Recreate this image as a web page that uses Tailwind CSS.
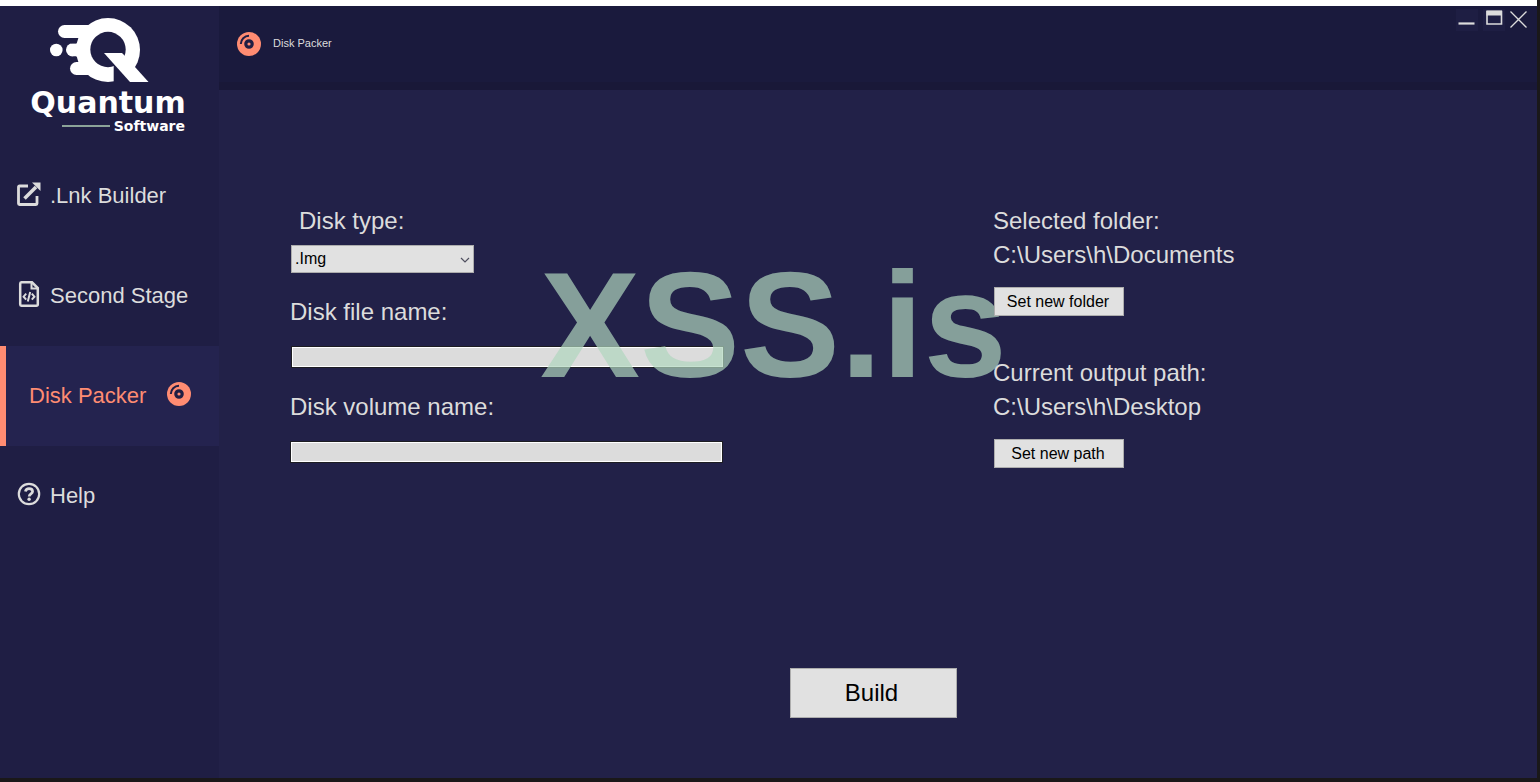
<!DOCTYPE html>
<html lang="en">
<head>
	<meta charset="UTF-8">
	<meta name="viewport" content="width=device-width, initial-scale=1.0">
	<title>Quantum Software - Disk Packer</title>
	<script src="https://cdn.jsdelivr.net/npm/@tailwindcss/browser@4"></script>
</head>
<body class="min-h-screen flex flex-col bg-[#222148] border-r-3 border-b-4 border-[#1a1819] font-['Liberation_Sans',Arial,sans-serif] text-[#dcdcdc]">
	<!-- disc icon, used in the menu and in the header -->
	<svg class="hidden">
		<symbol id="disc" viewBox="0 0 24 24">
			<circle cx="12" cy="12" r="12" fill="#ff8c72"/>
			<path d="M3.800 12A8.200 8.200 0 0 1 12 3.800" fill="none" stroke="#1f1e44" stroke-width="2"/>
			<circle cx="12" cy="12" r="3.200" fill="none" stroke="#1f1e44" stroke-width="3.200"/>
		</symbol>
	</svg>

	<div class="h-1.5 bg-white"></div>

	<div class="flex flex-1">
		<aside class="w-[219px] shrink-0 bg-[#1f1e44]">
			<div class="h-[140px] pt-[11px] pr-[3px] flex flex-col items-center text-white font-['DejaVu_Sans',sans-serif] font-bold">
				<svg class="w-[100px] h-[66px] mb-1 mr-[16px]" viewBox="50 17 100 66" fill="#fff">
					<circle cx="56.3" cy="50" r="6.3"/>
					<rect x="58" y="25" width="40" height="13" rx="6.5"/>
					<rect x="66" y="43.3" width="34" height="13.2" rx="6.5"/>
					<rect x="70" y="62" width="36" height="13" rx="6.5"/>
					<path d="M76 31h16v38H76z"/>
					<path d="M72 40.7h6.500M74 59.3h6.500" stroke="#1f1e44" stroke-width="5.400" stroke-linecap="round"/>
					<circle cx="108" cy="50" r="32"/>
					<circle cx="108" cy="49.5" r="17.7" fill="#1f1e44"/>
					<path d="M113.700 60l19 23h-19z" fill="#1f1e44"/>
					<path d="M104 53h18l1.500 1.500 11.500 12.500L148.500 82H130z"/>
				</svg>
				<div class="text-[30px] leading-[32px]">Quantum</div>
				<div class="w-[154px] flex items-center justify-end gap-[4px] text-[14px] leading-[14px]">
					<span class="w-12 h-[2px] bg-[#8ba398]"></span>
					<span>Software</span>
				</div>
			</div>

			<nav class="text-[22px] leading-[34px]">
				<a href="#" class="h-[100px] pl-[17px] flex items-center gap-[9px]">
					<svg class="w-6 h-6 mb-1" viewBox="0 0 24 24" fill="none" stroke="#dcdcdc" stroke-width="2.800">
						<path d="M11 4H2.500a1 1 0 0 0-1 1v16.500a1 1 0 0 0 1 1h16.500a1 1 0 0 0 1-1V14"/>
						<path d="M7.500 16.500L19 5" stroke-width="3.600"/>
						<path d="M15 .5h8.500V9z" fill="#dcdcdc" stroke="none"/>
					</svg>
					.Lnk Builder
				</a>
				<a href="#" class="h-[100px] pl-[17px] flex items-center gap-[9px]">
					<svg class="w-6 h-[26px] mb-1" viewBox="0 0 24 26" fill="none" stroke="#dcdcdc" stroke-width="2.500">
						<path d="M4.500 1.300H15l5.800 5.700v16.200a1.500 1.500 0 0 1-1.500 1.500h-14.800A1.500 1.500 0 0 1 3.200 23.200v-20.400A1.500 1.500 0 0 1 4.500 1.300z"/>
						<path d="M14.500 1v6.500H21" stroke-width="2"/>
						<path d="M9.200 12.700L6.600 15.700l2.600 3M14.800 12.700l2.600 3-2.600 3M13.200 11l-2.400 9.500" stroke-width="2"/>
					</svg>
					Second Stage
				</a>
				<a href="#" class="h-[100px] pl-[23px] pr-[28px] flex items-center justify-between bg-[#24234f] border-l-6 border-[#ff8c72] text-[#ff8c72]">
					Disk Packer
					<svg class="w-6 h-6 mb-1"><use href="#disc"/></svg>
				</a>
				<a href="#" class="h-[100px] pl-[17px] flex items-center gap-[9px]">
					<svg class="w-6 h-6 mb-1" viewBox="0 0 24 24" fill="none" stroke="#dcdcdc">
						<circle cx="12" cy="12" r="10.200" stroke-width="2.200"/>
						<path d="M8.400 9.600c.4-2 1.700-3 3.600-3 2.100 0 3.600 1.200 3.600 2.900 0 2.500-3.400 2.400-3.400 5" stroke-width="2.700"/>
						<circle cx="12.100" cy="17.300" r="1.700" fill="#dcdcdc" stroke="none"/>
					</svg>
					Help
				</a>
			</nav>
		</aside>

		<div class="flex-1 flex flex-col">
			<header class="h-[84px] pl-[18px] pr-[5px] flex items-center justify-between bg-[#1a1a3d] border-b-8 border-[#191838]">
				<h1 class="flex items-center gap-3 text-[11px] leading-4">
					<svg class="w-6 h-6"><use href="#disc"/></svg>
					<span class="mb-[2px]">Disk Packer</span>
				</h1>
				<div class="self-start pt-[3px] flex gap-[5px]">
					<button type="button" aria-label="Minimize" class="w-[22px] h-[22px] bg-[#1e1e43]">
						<svg viewBox="0 0 22 22"><path d="M2.500 14.500h16" stroke="#dcdcdc" stroke-width="2.200"/></svg>
					</button>
					<button type="button" aria-label="Maximize" class="w-[22px] h-[22px] bg-[#1e1e43]">
						<svg viewBox="0 0 22 22"><path d="M4 2.500h14.500v12.500H4z" fill="none" stroke="#dcdcdc" stroke-width="1.600"/><path d="M3.500 1.500h15.500v5H3.500z" fill="#dcdcdc"/></svg>
					</button>
					<button type="button" aria-label="Close" class="w-[22px] h-[22px]">
						<svg viewBox="0 0 22 22"><path d="M.5 2.500l16 16M16.500 2.500l-16 16" stroke="#dcdcdc" stroke-width="1.300"/></svg>
					</button>
				</div>
			</header>

			<main class="relative flex-1 pt-[114px] pb-[60px]">
				<form>
					<div class="pl-[71px] grid grid-cols-[703fr_544fr] text-[24px] leading-[34px]">
						<div class="flex flex-col items-start">
							<label for="diskType" class="pl-[9px]">Disk type:</label>
							<div class="relative mt-[7px] ml-px">
								<select id="diskType" class="block appearance-none w-[183px] h-7 pl-[3px] bg-[#e1e1e1] border border-[#adadad] text-black text-[16px] leading-[26px]">
									<option>.Img</option>
									<option>.Iso</option>
								</select>
								<svg class="absolute right-1 top-[10px] w-[10px] h-[10px] pointer-events-none" viewBox="0 0 10 10" fill="none" stroke="#505060" stroke-width="1.200"><path d="M1 3l4 4 4-4"/></svg>
							</div>
							<label for="fileName" class="mt-[22px]">Disk file name:</label>
							<input type="text" id="fileName" name="fileName" class="mt-[18px] ml-[2px] w-[431px] h-5 px-1 bg-[#dcdcdc] border border-white outline outline-[#1d1d22] text-black text-[14px]">
							<label for="volumeName" class="mt-[23px]">Disk volume name:</label>
							<input type="text" id="volumeName" name="volumeName" class="mt-[18px] ml-px w-[431px] h-5 px-1 bg-[#dcdcdc] border border-white outline outline-[#1d1d22] text-black text-[14px]">
						</div>
						<div class="relative z-10 flex flex-col items-start">
							<p>Selected folder:</p>
							<p>C:\Users\h\Documents</p>
							<button type="button" class="mt-[15px] ml-px w-[130px] h-[29px] pr-[2px] bg-[#e1e1e1] border border-[#adadad] text-black text-[16px] leading-[26px]">Set new folder</button>
							<p class="mt-10">Current output path:</p>
							<p>C:\Users\h\Desktop</p>
							<button type="button" class="mt-[15px] ml-px w-[130px] h-[29px] pr-[2px] bg-[#e1e1e1] border border-[#adadad] text-black text-[16px] leading-[26px]">Set new path</button>
						</div>
					</div>
					<div class="mt-[200px] pr-[9px] flex justify-center">
						<button type="submit" class="w-[167px] h-[50px] pr-1 bg-[#e1e1e1] border border-[#adadad] text-black text-[24px]">Build</button>
					</div>
				</form>
				<!-- watermark -->
				<div class="absolute left-[321px] top-[160px] pointer-events-none text-[150px] leading-[150px] font-bold text-[#afd5bd]/70">XSS.is</div>
			</main>
		</div>
	</div>
</body>
</html>
